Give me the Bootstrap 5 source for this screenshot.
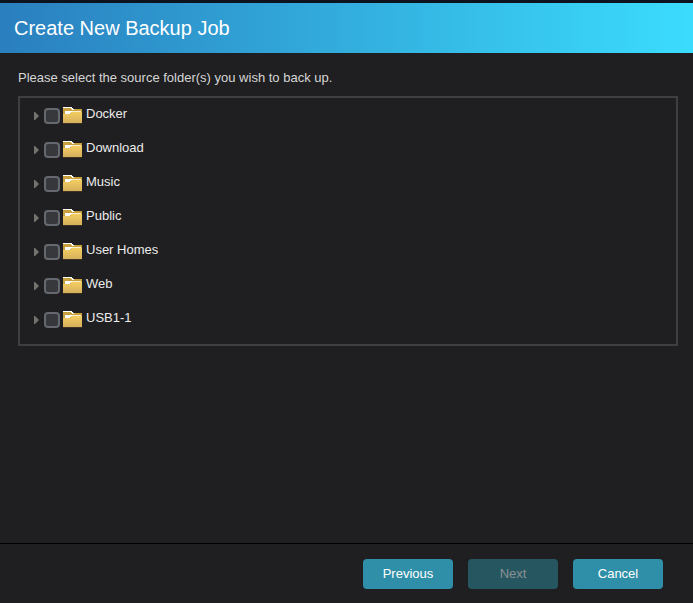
<!DOCTYPE html>
<html lang="en" data-bs-theme="dark">
<head>
<meta charset="utf-8">
<meta name="viewport" content="width=device-width, initial-scale=1">
<title>Create New Backup Job</title>
<link href="https://cdn.jsdelivr.net/npm/bootstrap@5.3.0/dist/css/bootstrap.min.css" rel="stylesheet">
<style>
body { background: #1f1f21; color: #d6d6d6; font-family: "Liberation Sans", Arial, sans-serif; font-size: 13px; line-height: 20px; }
.wizard-head { background: linear-gradient(90deg, #2a7fbe, #3bdcfd); border-top: 3px solid #0e1320; padding: 10px 14px; }
.wizard-title { color: #fff; font-size: 20px; line-height: 30px; font-weight: 400; }
.wizard-body { padding: 15px 15px 16px 18px; }
.folder-box { border: 2px solid #3e3e43; margin-top: 8px; padding: 0 12px 8px 14px; }
.folder-row { height: 34px; padding-top: 2px; }
.twisty { width: 10px; height: 18px; line-height: 0; }
.folder-row .form-check-input { width: 16px; height: 16px; background-color: #37383b; border: 2px solid #65696f; border-radius: 4px; }
.folder-label { color: #ececec; padding-bottom: 4px; }
.folder-icon { margin: 0 4px 0 3px; }
.wizard-foot { border-top: 1px solid #000; padding: 15px 30px 14px; gap: 15px; }
.btn-wizard { --bs-btn-color: #fff; --bs-btn-bg: #2f8fa8; --bs-btn-hover-color: #fff; --bs-btn-hover-bg: #38a0bb; --bs-btn-active-bg: #287c92; --bs-btn-active-color: #fff; --bs-btn-disabled-color: #8b9092; --bs-btn-disabled-bg: #265761; --bs-btn-disabled-opacity: 1; --bs-btn-border-width: 0; --bs-btn-border-radius: 4px; --bs-btn-font-size: 13px; --bs-btn-line-height: 20px; --bs-btn-padding-x: 4px; --bs-btn-padding-y: 5px; width: 90px; }
</style>
</head>
<body>
<svg class="position-absolute" width="0" height="0" aria-hidden="true">
  <defs>
    <linearGradient id="gold" x1="0" y1="0" x2="0" y2="1"><stop offset="0" stop-color="#f3ce62"/><stop offset="1" stop-color="#d6b05c"/></linearGradient>
  </defs>
  <symbol id="folder" viewBox="0 0 19 18">
    <path d="M0 1h9l2 1h8v5H0z" fill="#c9a13c"/>
    <path d="M0 0h9v1h1v1h1v1H9V2H8V1H0z" fill="#fff"/>
    <path d="M0 7h8V5h11v11H0z" fill="url(#gold)"/>
    <path d="M8 4h10v1H8z" fill="#f6edcd"/>
    <path d="M2 4h7v1H8v1H7v1H2z" fill="#fff"/>
    <path d="M0 16h19v1H0z" fill="#3b3323"/>
  </symbol>
  <symbol id="arrow" viewBox="0 0 5 8"><path d="M0 0h1l4 4L1 8H0z" fill="#75736f"/></symbol>
</svg>
<div class="d-flex flex-column min-vh-100">
  <header class="wizard-head"><h1 class="wizard-title m-0">Create New Backup Job</h1></header>
  <main class="wizard-body flex-grow-1">
    <p class="m-0">Please select the source folder(s) you wish to back up.</p>
    <ul class="folder-box list-unstyled mb-0">
      <li class="folder-row d-flex align-items-center"><button type="button" class="twisty btn p-0 border-0 text-start" aria-label="Expand Docker"><svg width="5" height="8"><use href="#arrow"/></svg></button><input class="form-check-input m-0" type="checkbox" id="f1"><svg class="folder-icon" width="19" height="18"><use href="#folder"/></svg><label class="folder-label" for="f1">Docker</label></li>
      <li class="folder-row d-flex align-items-center"><button type="button" class="twisty btn p-0 border-0 text-start" aria-label="Expand Download"><svg width="5" height="8"><use href="#arrow"/></svg></button><input class="form-check-input m-0" type="checkbox" id="f2"><svg class="folder-icon" width="19" height="18"><use href="#folder"/></svg><label class="folder-label" for="f2">Download</label></li>
      <li class="folder-row d-flex align-items-center"><button type="button" class="twisty btn p-0 border-0 text-start" aria-label="Expand Music"><svg width="5" height="8"><use href="#arrow"/></svg></button><input class="form-check-input m-0" type="checkbox" id="f3"><svg class="folder-icon" width="19" height="18"><use href="#folder"/></svg><label class="folder-label" for="f3">Music</label></li>
      <li class="folder-row d-flex align-items-center"><button type="button" class="twisty btn p-0 border-0 text-start" aria-label="Expand Public"><svg width="5" height="8"><use href="#arrow"/></svg></button><input class="form-check-input m-0" type="checkbox" id="f4"><svg class="folder-icon" width="19" height="18"><use href="#folder"/></svg><label class="folder-label" for="f4">Public</label></li>
      <li class="folder-row d-flex align-items-center"><button type="button" class="twisty btn p-0 border-0 text-start" aria-label="Expand User Homes"><svg width="5" height="8"><use href="#arrow"/></svg></button><input class="form-check-input m-0" type="checkbox" id="f5"><svg class="folder-icon" width="19" height="18"><use href="#folder"/></svg><label class="folder-label" for="f5">User Homes</label></li>
      <li class="folder-row d-flex align-items-center"><button type="button" class="twisty btn p-0 border-0 text-start" aria-label="Expand Web"><svg width="5" height="8"><use href="#arrow"/></svg></button><input class="form-check-input m-0" type="checkbox" id="f6"><svg class="folder-icon" width="19" height="18"><use href="#folder"/></svg><label class="folder-label" for="f6">Web</label></li>
      <li class="folder-row d-flex align-items-center"><button type="button" class="twisty btn p-0 border-0 text-start" aria-label="Expand USB1-1"><svg width="5" height="8"><use href="#arrow"/></svg></button><input class="form-check-input m-0" type="checkbox" id="f7"><svg class="folder-icon" width="19" height="18"><use href="#folder"/></svg><label class="folder-label" for="f7">USB1-1</label></li>
    </ul>
  </main>
  <footer class="wizard-foot d-flex justify-content-end">
    <button type="button" class="btn btn-wizard">Previous</button>
    <button type="button" class="btn btn-wizard" disabled>Next</button>
    <button type="button" class="btn btn-wizard">Cancel</button>
  </footer>
</div>
<script src="https://cdn.jsdelivr.net/npm/bootstrap@5.3.0/dist/js/bootstrap.bundle.min.js"></script>
</body>
</html>
